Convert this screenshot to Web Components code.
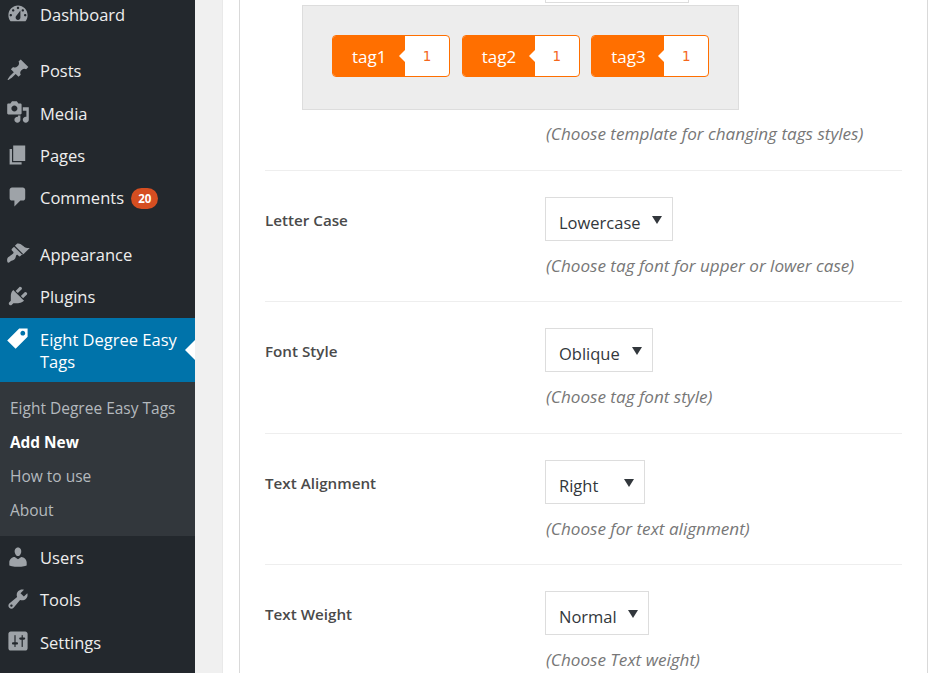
<!doctype html>
<html>
<head>
<meta charset="utf-8">
<style>
  html, body { margin: 0; height: 100%; overflow: hidden; background: #fff; }
  body { font-family: "Open Sans", "Liberation Sans", sans-serif; }
</style>
</head>
<body>
<wp-page>
  <wp-menu slot="menu">
    <wp-item icon="dashboard">Dashboard</wp-item>
    <wp-sep></wp-sep>
    <wp-item icon="pin">Posts</wp-item>
    <wp-item icon="media">Media</wp-item>
    <wp-item icon="pages">Pages</wp-item>
    <wp-item icon="comments">Comments <wp-badge>20</wp-badge></wp-item>
    <wp-sep></wp-sep>
    <wp-item icon="appearance">Appearance</wp-item>
    <wp-item icon="plugins">Plugins</wp-item>
    <wp-item icon="tag" current>Eight Degree Easy Tags</wp-item>
    <wp-submenu>
      <wp-subitem>Eight Degree Easy Tags</wp-subitem>
      <wp-subitem current>Add New</wp-subitem>
      <wp-subitem>How to use</wp-subitem>
      <wp-subitem>About</wp-subitem>
    </wp-submenu>
    <wp-item icon="users">Users</wp-item>
    <wp-item icon="tools">Tools</wp-item>
    <wp-item icon="settings">Settings</wp-item>
  </wp-menu>
  <form-row first hint="(Choose template for changing tags styles)">
    <fake-select width="144"></fake-select>
    <tag-preview>
      <tag-chip count="1">tag1</tag-chip>
      <tag-chip count="1">tag2</tag-chip>
      <tag-chip count="1">tag3</tag-chip>
    </tag-preview>
  </form-row>
  <form-row label="Letter Case" hint="(Choose tag font for upper or lower case)">
    <fake-select width="128">Lowercase</fake-select>
  </form-row>
  <form-row label="Font Style" hint="(Choose tag font style)">
    <fake-select width="108">Oblique</fake-select>
  </form-row>
  <form-row label="Text Alignment" hint="(Choose for text alignment)">
    <fake-select width="100">Right</fake-select>
  </form-row>
  <form-row label="Text Weight" hint="(Choose Text weight)">
    <fake-select width="104">Normal</fake-select>
  </form-row>
</wp-page>

<script>
const ICONS = {
  dashboard: 'M3.76 16h12.48c1.1-1.37 1.76-3.11 1.76-5 0-4.42-3.58-8-8-8s-8 3.58-8 8c0 1.89.66 3.63 1.76 5zM10 4c.55 0 1 .45 1 1s-.45 1-1 1-1-.45-1-1 .45-1 1-1zM6 6c.55 0 1 .45 1 1s-.45 1-1 1-1-.45-1-1 .45-1 1-1zm8 0c.55 0 1 .45 1 1s-.45 1-1 1-1-.45-1-1 .45-1 1-1zm-5.37 5.55L12 7v6c0 1.1-.9 2-2 2s-2-.9-2-2c0-.57.24-1.08.63-1.45zM4 10c.55 0 1 .45 1 1s-.45 1-1 1-1-.45-1-1 .45-1 1-1zm12 0c.55 0 1 .45 1 1s-.45 1-1 1-1-.45-1-1 .45-1 1-1z',
  pin: 'M10.44 3.02l1.82-1.82 6.36 6.35-1.83 1.82c-1.05-.68-2.48-.57-3.41.36l-.75.75c-.92.93-1.04 2.35-.35 3.41l-1.83 1.82-2.41-2.41-2.8 2.79c-.42.42-3.38 2.71-3.8 2.29s1.86-3.39 2.28-3.81l2.79-2.79L4.1 9.36l1.83-1.82c1.05.69 2.48.57 3.4-.36l.75-.75c.93-.92 1.05-2.35.36-3.41z',
  media: 'M13 11V4c0-.55-.45-1-1-1h-1.67L9 1H5L3.67 3H2c-.55 0-1 .45-1 1v7c0 .55.45 1 1 1h10c.55 0 1-.45 1-1zM7 4.5c1.38 0 2.5 1.12 2.5 2.5S8.38 9.5 7 9.5 4.5 8.38 4.5 7 5.62 4.5 7 4.5zM14 6h5v10.5c0 1.38-1.12 2.5-2.5 2.5S14 17.88 14 16.5s1.12-2.5 2.5-2.5c.17 0 .34.02.5.05V9h-3V6zm-4 8.05V13h2v3.5c0 1.38-1.12 2.5-2.5 2.5S7 17.88 7 16.5 8.12 14 9.5 14c.17 0 .34.02.5.05z',
  pages: 'M6 15V2h10v13H6zm-1 1h8v2H3V5h2v11z',
  comments: 'M5 2h9c1.1 0 2 .9 2 2v7c0 1.1-.9 2-2 2h-2l-5 5v-5H5c-1.1 0-2-.9-2-2V4c0-1.1.9-2 2-2z',
  appearance: 'M14.48 11.06L7.41 3.99l1.5-1.5c.5-.56 2.3-.47 3.51.32 1.21.8 1.43 1.28 2.91 2.1 1.18.64 2.45 1.26 4.45.85zm-.71.71L6.7 4.7 4.93 6.47c-.39.39-.39 1.02 0 1.41l1.06 1.06c.39.39.39 1.03 0 1.42-.6.6-1.43 1.11-2.21 1.69-.35.26-.7.53-1.01.84C1.43 13.23.5 15.05 1.1 17.3c.25.94 1.14 1.06 1.82.4 1.57-1.56 3.33-1.57 4.2-2.44.87-.88.97-2.33 1.44-3.45.16-.38.71-.57 1-.28l1.06 1.06c.39.39 1.02.39 1.41 0l1.77-1.77z',
  plugins: 'M13.11 4.36L9.87 7.6 8 5.73l3.24-3.24c.35-.34 1.05-.2 1.56.32.52.51.66 1.21.31 1.55zm-8 1.77l.91-1.12 9.01 9.01-1.19.84c-.71.71-2.63 1.16-3.82 1.16H6.14L4.9 17.26c-.59.59-1.54.59-2.12 0-.59-.58-.59-1.53 0-2.12l1.24-1.24v-3.88c0-1.13.4-3.19 1.09-3.89zm7.26 3.97l3.24-3.24c.34-.35 1.04-.21 1.55.31.52.51.66 1.21.31 1.55l-3.24 3.25z',
  tag: 'M11 2h7v7L8 19l-7-7zm3 6c1.1 0 2-.9 2-2s-.9-2-2-2-2 .9-2 2 .9 2 2 2z',
  users: 'M10 9.25c-2.27 0-2.73-3.44-2.73-3.44C7 4.02 7.82 2 9.97 2c2.16 0 2.98 2.02 2.71 3.81 0 0-.41 3.44-2.68 3.44zm0 2.57L12.72 10c2.39 0 4.52 2.33 4.52 4.53v2.49s-3.65 1.13-7.24 1.13c-3.65 0-7.24-1.13-7.24-1.13v-2.49c0-2.25 1.94-4.48 4.47-4.48z',
  tools: 'M16.68 9.77c-1.34 1.34-3.3 1.67-4.95.99l-5.41 6.52c-.99.99-2.59.99-3.58 0s-.99-2.59 0-3.57l6.52-5.42c-.68-1.65-.35-3.61.99-4.95 1.28-1.28 3.12-1.62 4.72-1.06l-2.89 2.89 2.82 2.82 2.86-2.87c.53 1.58.18 3.39-1.08 4.65zM3.81 16.21c.4.39 1.04.39 1.43 0 .4-.4.4-1.04 0-1.43-.39-.4-1.03-.4-1.43 0-.39.39-.39 1.03 0 1.43z',
  settings: 'M18 16V4c0-1.1-.9-2-2-2H4c-1.1 0-2 .9-2 2v12c0 1.1.9 2 2 2h12c1.1 0 2-.9 2-2zM8 11h1c.55 0 1 .45 1 1s-.45 1-1 1H8v1.5c0 .28-.22.5-.5.5s-.5-.22-.5-.5V13H6c-.55 0-1-.45-1-1s.45-1 1-1h1V5.5c0-.28.22-.5.5-.5s.5.22.5.5V11zm5-2h-1c-.55 0-1-.45-1-1s.45-1 1-1h1V5.5c0-.28.22-.5.5-.5s.5.22.5.5V7h1c.55 0 1 .45 1 1s-.45 1-1 1h-1v5.5c0 .28-.22.5-.5.5s-.5-.22-.5-.5V9z'
};

// small helper, every element below is just a shadow root with a style and some markup
class ShadowEl extends HTMLElement {
  constructor() {
    super();
    this.attachShadow({ mode: 'open' });
  }
  connectedCallback() {
    this.shadowRoot.innerHTML = this.markup();
  }
}

class WpPage extends ShadowEl {
  markup() {
    return `
      <style>
        :host { display: flex; height: 673px; overflow: hidden; background: #fff; }
        .side { flex: 0 0 195px; background: #23282d; }
        .gutter { flex: 0 0 28px; box-sizing: border-box; background: #f0f0f0; border-right: 1px solid #e9e9e9; }
        .gap { flex: 0 0 16px; background: #fff; }
        .card { flex: 0 0 689px; box-sizing: border-box; padding: 0 25px; background: #fff;
                border-left: 1px solid #d9d9d9; border-right: 1px solid #d9d9d9; }
      </style>
      <div class="side"><slot name="menu"></slot></div>
      <div class="gutter"></div>
      <div class="gap"></div>
      <div class="card"><slot></slot></div>`;
  }
}

class WpMenu extends ShadowEl {
  markup() {
    return `
      <style>
        :host { display: block; margin-top: -7px; color: #eee; font-size: 16.5px; }
      </style>
      <slot></slot>`;
  }
}

class WpItem extends ShadowEl {
  markup() {
    const on = this.hasAttribute('current');
    return `
      <style>
        :host { display: flex; position: relative; box-sizing: border-box; min-height: 42.4px; align-items: flex-start; }
        :host([current]) { background: #0073aa; color: #fff; height: 64px; }
        .ic { flex: 0 0 24px; width: 24px; height: 24px; margin: 8.5px 4px 0 6px; fill: ${on ? '#fff' : '#9ea3a8'}; }
        .lb { padding: 10.8px 8px 8px 6px; line-height: 22px; flex: 1; }
        :host([current]) .lb { padding-top: 11px; }
        .arrow { position: absolute; right: 0; top: 22px; border: 10px solid transparent; border-right-color: #fff; border-left: 0; }
      </style>
      <svg class="ic" viewBox="0 0 20 20"><path fill-rule="evenodd" d="${ICONS[this.getAttribute('icon')]}"/></svg>
      <div class="lb"><slot></slot></div>
      ${on ? '<div class="arrow"></div>' : ''}`;
  }
}

class WpSep extends ShadowEl {
  markup() { return `<style>:host { display: block; height: 14px; }</style>`; }
}

class WpBadge extends ShadowEl {
  markup() {
    return `
      <style>
        :host { display: inline-block; box-sizing: border-box; height: 21px; min-width: 27px; padding: 0 6px; margin-left: 3px;
                border-radius: 11px; background: #d54e21; color: #fff; font-size: 11.5px; font-weight: 700;
                line-height: 21px; text-align: center; vertical-align: 1px; }
      </style>
      <slot></slot>`;
  }
}

class WpSubmenu extends ShadowEl {
  markup() {
    return `
      <style>:host { display: block; box-sizing: border-box; height: 154.3px; padding: 10px 0; background: #32373c; }</style>
      <slot></slot>`;
  }
}

class WpSubitem extends ShadowEl {
  markup() {
    return `
      <style>
        :host { display: block; height: 34px; line-height: 33px; padding-left: 10px; font-size: 15.5px; color: #b4b9be; white-space: nowrap; }
        :host([current]) { color: #fff; font-weight: 700; font-size: 15.4px; }
      </style>
      <slot></slot>`;
  }
}

class FormRow extends ShadowEl {
  markup() {
    const label = this.getAttribute('label') || '';
    return `
      <style>
        :host { display: grid; grid-template-columns: 280px 1fr; box-sizing: border-box; height: 131.4px; padding-top: 26px;
                border-bottom: 1px solid #eee; }
        :host([first]) { height: 212px; margin-top: -41px; padding-top: 0; }
        :host(:last-of-type) { border-bottom: 0; }
        .lab { font-size: 15.2px; font-weight: 600; color: #4a4a4a; line-height: 47px; }
        .hint { margin-top: 13px; padding-left: 1px; font-size: 17.1px; line-height: 24px; font-style: italic; color: #777; white-space: nowrap; }
        :host([first]) .hint { margin-top: 12px; }
      </style>
      <div class="lab">${label}</div>
      <div><slot></slot><div class="hint">${this.getAttribute('hint') || ''}</div></div>`;
  }
}

class FakeSelect extends ShadowEl {
  markup() {
    return `
      <style>
        :host { display: flex; box-sizing: border-box; width: ${this.getAttribute('width')}px; height: 44px;
                padding: 10px 10px 0 13px; justify-content: space-between; background: #fff; border: 1px solid #ddd;
                color: #32373c; font-size: 16.5px; line-height: 30px; }
        .caret { width: 0; height: 0; margin-top: 8px; border: 5.5px solid transparent; border-bottom: 0;
                 border-top: 8px solid #32373c; }
      </style>
      <span><slot></slot></span><span class="caret"></span>`;
  }
}

class TagPreview extends ShadowEl {
  markup() {
    return `
      <style>
        :host { display: flex; gap: 11.6px; box-sizing: border-box; width: 437px; height: 105px; margin: 2px 0 0 -243px;
                padding: 29px 0 0 29px; background: #ededed; border: 1px solid #ddd; }
      </style>
      <slot></slot>`;
  }
}

class TagChip extends ShadowEl {
  markup() {
    return `
      <style>
        :host { display: flex; box-sizing: border-box; height: 42px; border: 1px solid #ff6f00; border-radius: 4px;
                background: #fff; overflow: hidden; }
        .name { position: relative; padding: 0 18.6px 0 19px; background: #ff6f00; color: #fff; font-size: 17px; line-height: 41px; }
        .name::after { content: ""; position: absolute; right: 0; top: 14px; border: 6px solid transparent;
                       border-right: 6px solid #fff; border-left: 0; }
        .num { width: 44px; text-align: center; color: #f4661c; font-family: "DejaVu Sans", sans-serif; font-size: 13.5px; line-height: 41px; }
      </style>
      <div class="name"><slot></slot></div><div class="num">${this.getAttribute('count')}</div>`;
  }
}

customElements.define('wp-page', WpPage);
customElements.define('wp-menu', WpMenu);
customElements.define('wp-item', WpItem);
customElements.define('wp-sep', WpSep);
customElements.define('wp-badge', WpBadge);
customElements.define('wp-submenu', WpSubmenu);
customElements.define('wp-subitem', WpSubitem);
customElements.define('form-row', FormRow);
customElements.define('fake-select', FakeSelect);
customElements.define('tag-preview', TagPreview);
customElements.define('tag-chip', TagChip);
</script>
</body>
</html>
